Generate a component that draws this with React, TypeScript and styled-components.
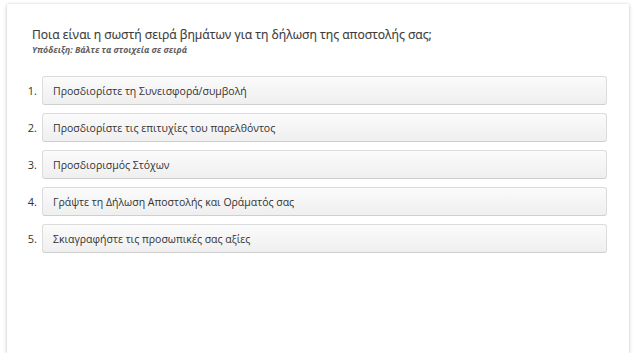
import React from 'react';
import styled, { createGlobalStyle } from 'styled-components';

const GlobalStyle = createGlobalStyle`
  html, body {
    margin: 0;
    padding: 0;
    background: #ffffff;
    font-family: "Open Sans", "Noto Sans", sans-serif;
  }
`;

const steps: string[] = [
  'Προσδιορίστε τη Συνεισφορά/συμβολή',
  'Προσδιορίστε τις επιτυχίες του παρελθόντος',
  'Προσδιορισμός Στόχων',
  'Γράψτε τη Δήλωση Αποστολής και Οράματός σας',
  'Σκιαγραφήστε τις προσωπικές σας αξίες',
];

const App: React.FC = () => {
  return (
    <>
      <GlobalStyle />
      <Page>
        <Card>
          <Header>
            <Question>Ποια είναι η σωστή σειρά βημάτων για τη δήλωση της αποστολής σας;</Question>
            <Hint>Υπόδειξη: Βάλτε τα στοιχεία σε σειρά</Hint>
          </Header>
          <StepList>
            {steps.map((step, index) => (
              <StepRow key={index}>
                <StepNumber>{index + 1}.</StepNumber>
                <StepBox>{step}</StepBox>
              </StepRow>
            ))}
          </StepList>
        </Card>
      </Page>
    </>
  );
};

const Page = styled.div`
  padding: 4px 7px 0 7px;
`;

const Card = styled.div`
  box-sizing: border-box;
  width: 622px;
  height: 349px;
  background: #ffffff;
  box-shadow: 0 1px 4px rgba(0, 0, 0, 0.22), 0 0 1px rgba(0, 0, 0, 0.12);
  padding: 22px 22px 0 18px;
`;

const Header = styled.div`
  padding-left: 7px;
`;

const Question = styled.h2`
  margin: 0;
  font-size: 12.1px;
  font-weight: 400;
  line-height: 18px;
  color: #3a3a3a;
  -webkit-text-stroke: 0.15px #3a3a3a;
`;

const Hint = styled.div`
  font-size: 8.7px;
  font-style: italic;
  font-weight: 700;
  line-height: 13px;
  color: #5f5f5f;
`;

const StepList = styled.ol`
  list-style: none;
  margin: 19px 0 0 0;
  padding: 0;
  display: flex;
  flex-direction: column;
  gap: 8px;
`;

const StepRow = styled.li`
  display: flex;
  align-items: center;
`;

const StepNumber = styled.span`
  width: 12px;
  margin-right: 5px;
  text-align: right;
  font-size: 11px;
  color: #333333;
`;

const StepBox = styled.div`
  box-sizing: border-box;
  flex: 1;
  height: 29px;
  display: flex;
  align-items: center;
  padding-left: 10px;
  font-size: 10.5px;
  color: #333333;
  background: linear-gradient(to bottom, #fbfbfb, #efefef);
  border: 1px solid #dcdcdc;
  border-bottom-color: #cfcfcf;
  border-radius: 3px;
`;

export default App;
